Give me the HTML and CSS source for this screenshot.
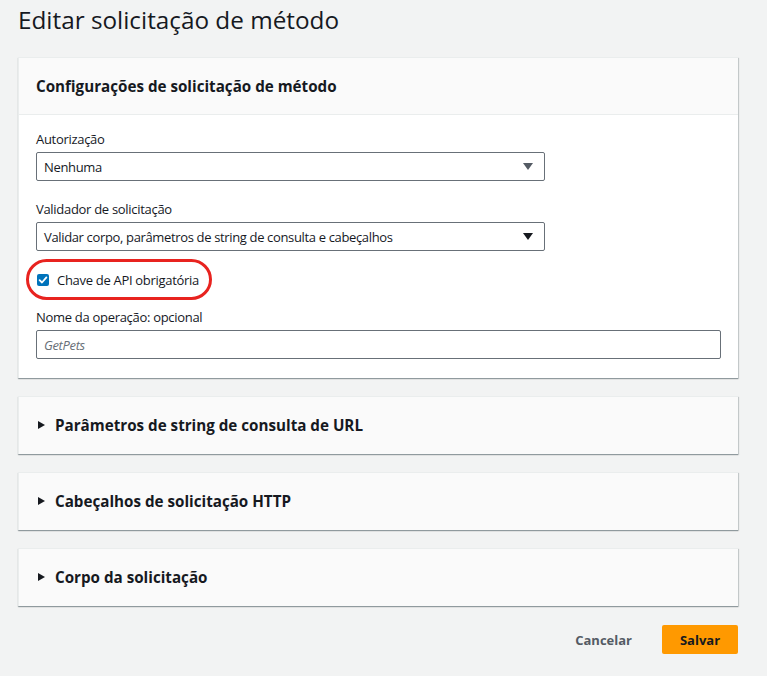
FILE: index.html
```html
<!DOCTYPE html>
<html lang="pt-BR">
<head>
<meta charset="utf-8">
<title>Editar solicitação de método</title>
<link rel="stylesheet" href="styles.css">
</head>
<body>
<main class="page">
  <h1 class="title">Editar solicitação de método</h1>

  <section class="card">
    <header class="card-header"><h2>Configurações de solicitação de método</h2></header>
    <div class="card-body">
      <div class="field">
        <label class="label">Autorização</label>
        <div class="select"><span>Nenhuma</span><span class="caret caret-gray"></span></div>
      </div>
      <div class="field">
        <label class="label">Validador de solicitação</label>
        <div class="select"><span>Validar corpo, parâmetros de string de consulta e cabeçalhos</span><span class="caret"></span></div>
      </div>
      <div class="check-row">
        <span class="checkbox"><svg viewBox="0 0 12 12" width="12" height="12"><path d="M2.6 6.2 L5 8.5 L9.4 3.4" fill="none" stroke="#fff" stroke-width="1.8" stroke-linecap="round" stroke-linejoin="round"/></svg></span>
        <span class="check-label">Chave de API obrigatória</span>
        <span class="highlight"></span>
      </div>
      <div class="field">
        <label class="label">Nome da operação: opcional</label>
        <div class="input"><span class="placeholder">GetPets</span></div>
      </div>
    </div>
  </section>

  <section class="card collapsed"><header class="expander"><span class="tri"></span><h2>Parâmetros de string de consulta de URL</h2></header></section>
  <section class="card collapsed"><header class="expander"><span class="tri"></span><h2>Cabeçalhos de solicitação HTTP</h2></header></section>
  <section class="card collapsed"><header class="expander"><span class="tri"></span><h2>Corpo da solicitação</h2></header></section>

  <div class="actions">
    <button class="btn-link">Cancelar</button>
    <button class="btn-primary">Salvar</button>
  </div>
</main>
</body>
</html>
```
FILE: styles.css
```css
* { box-sizing: border-box; }
html, body { margin: 0; padding: 0; }
body {
  background: #f2f3f3;
  font-family: "Open Sans", "Noto Sans", sans-serif;
  color: #16191f;
  width: 767px;
  height: 676px;
  overflow: hidden;
}
.page {
  padding: 0 29px 0 18px;
  display: flex;
  flex-direction: column;
}
.title {
  margin: 0;
  height: 57px;
  padding-top: 4px;
  font-size: 24.3px;
  font-weight: 400;
  line-height: 32px;
  color: #16191f;
}
.card {
  background: #fff;
  border-top: 1px solid #eaeded;
  border-left: 1px solid #eaeded;
  box-shadow: 0 1px 1px 0 rgba(0,28,36,.3), 1px 1px 1px 0 rgba(0,28,36,.15);
  margin-bottom: 18px;
}
.card-header {
  background: #fafafa;
  height: 57px;
  border-bottom: 1px solid #eaeded;
  display: flex;
  align-items: center;
  padding: 0 17px 1px;
}
.card h2 {
  margin: 0;
  font-size: 15.2px;
  font-weight: 700;
}
.card-body {
  padding: 15px 17px 19px;
  display: flex;
  flex-direction: column;
  gap: 19px;
}
.field { display: flex; flex-direction: column; gap: 4px; }
.label { font-size: 13px; line-height: 18px; color: #16191f; letter-spacing: -0.3px; }
.select, .input {
  height: 29px;
  border: 1px solid #687078;
  border-radius: 2px;
  display: flex;
  align-items: center;
  justify-content: space-between;
  padding: 0 11px 0 7px;
  font-size: 13px;
  letter-spacing: -0.35px;
  background: #fff;
}
.select { width: 509px; }
.caret {
  width: 0; height: 0;
  border-left: 5px solid transparent;
  border-right: 5px solid transparent;
  border-top: 7px solid #16191f;
}
.caret-gray { border-top-color: #545b64; }
.placeholder { font-style: italic; color: #687078; }
.check-row {
  position: relative;
  display: flex;
  align-items: center;
  gap: 8px;
  height: 19px;
  padding-left: 1px;
}
.checkbox {
  width: 12px; height: 12px;
  background: #0073bb;
  border-radius: 2px;
  display: flex;
}
.check-label { font-size: 13px; letter-spacing: -0.3px; }
.highlight {
  position: absolute;
  left: -10px;
  top: -11px;
  width: 186px;
  height: 41px;
  border: 3px solid #e8231f;
  border-radius: 21px;
}
.expander {
  background: #fafafa;
  height: 57px;
  display: flex;
  align-items: center;
  padding: 0 17px 2px 19px;
  gap: 10px;
}
.collapsed { border-top: 1px solid #eaeded; }
.tri {
  width: 0; height: 0;
  border-top: 4.5px solid transparent;
  border-bottom: 4.5px solid transparent;
  border-left: 7px solid #16191f;
}
.actions {
  display: flex;
  justify-content: flex-end;
  align-items: center;
  gap: 30px;
  margin-top: 1px;
}
button { font-family: inherit; cursor: pointer; }
.btn-link {
  border: 0;
  background: none;
  font-size: 13px;
  font-weight: 700;
  color: #545b64;
  padding: 0;
}
.btn-primary {
  width: 76px;
  height: 29px;
  background: #ff9900;
  border: 0;
  border-radius: 2px;
  font-size: 13px;
  font-weight: 700;
  color: #16191f;
}
```
